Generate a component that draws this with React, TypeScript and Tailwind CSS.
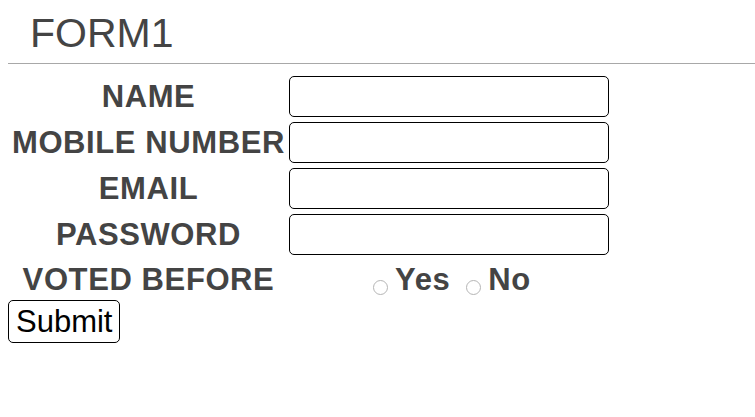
import { useState } from "react";

const FIELDS = [
  { label: "NAME", type: "text" },
  { label: "MOBILE NUMBER", type: "text" },
  { label: "EMAIL", type: "email" },
  { label: "PASSWORD", type: "password" },
];

export default function App() {
  const [voted, setVoted] = useState("");

  return (
    <div
      className="min-h-screen bg-white p-2 pr-0 text-[#444]"
      style={{ fontFamily: '"Liberation Sans", Arial, sans-serif' }}
    >
      {/* Heading */}
      <h1 className="ml-[22px] mt-[1px] text-[41px] leading-[48px] font-normal">FORM1</h1>
      <hr className="mt-[6px] border-t border-[#a8a8a8]" />

      <form className="mt-[12px]" onSubmit={(e) => e.preventDefault()}>
        <div className="grid grid-cols-[281px_320px] gap-y-[5px]">
          {FIELDS.map((f) => (
            <div key={f.label} className="contents">
              <label className="flex h-[41px] items-center justify-center whitespace-nowrap pt-[2px] text-[31px] font-bold tracking-[0.6px]">
                {f.label}
              </label>
              <input
                type={f.type}
                className="h-[41px] w-[320px] rounded-[5px] border border-black bg-white px-2 text-lg outline-none"
              />
            </div>
          ))}

          {/* Voted before */}
          <div className="flex h-[36px] items-center justify-center whitespace-nowrap pt-[4px] text-[31px] font-bold tracking-[0.6px]">
            VOTED BEFORE
          </div>
          <div className="flex h-[36px] items-center justify-center pl-[6px] pt-[4px] text-[31px] font-bold tracking-[0.6px]">
            <label className="flex items-center gap-[7px]">
              <input
                type="radio"
                name="voted"
                checked={voted === "yes"}
                onChange={() => setVoted("yes")}
                className="mt-[14px] h-[15px] w-[15px] appearance-none rounded-full border border-[#b5b5b5] bg-white checked:bg-[#3b82f6]"
              />
              Yes
            </label>
            <label className="ml-[16px] flex items-center gap-[7px]">
              <input
                type="radio"
                name="voted"
                checked={voted === "no"}
                onChange={() => setVoted("no")}
                className="mt-[14px] h-[15px] w-[15px] appearance-none rounded-full border border-[#b5b5b5] bg-white checked:bg-[#3b82f6]"
              />
              No
            </label>
          </div>
        </div>

        <button
          type="submit"
          className="mt-[4px] h-[43px] rounded-[5px] border border-black bg-white px-[7px] text-[31px] leading-none text-black"
        >
          Submit
        </button>
      </form>
    </div>
  );
}
